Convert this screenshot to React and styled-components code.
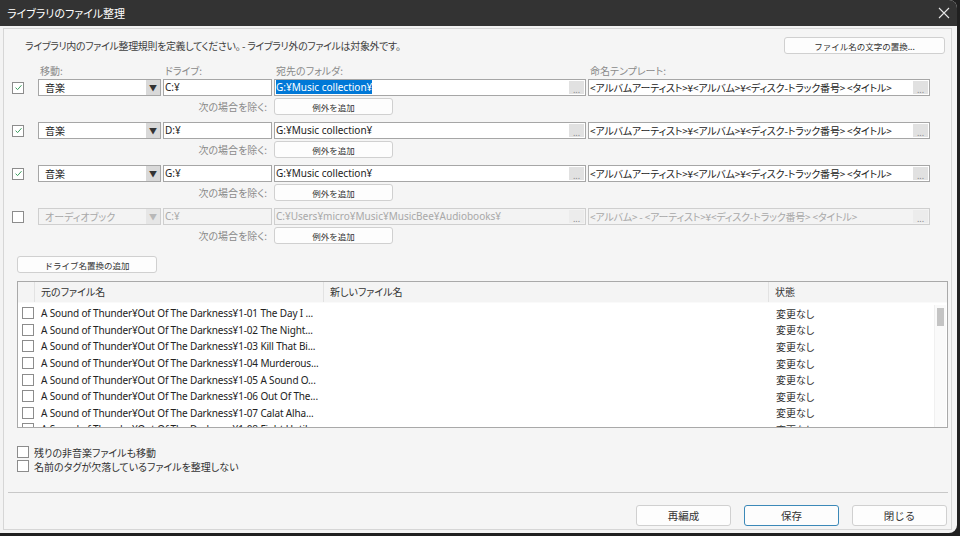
import React from "react";
import styled, { createGlobalStyle } from "styled-components";

const GlobalStyle = createGlobalStyle`
  body {
    margin: 0;
    background: #202020;
    font-family: "Noto Sans", "Noto Sans CJK JP", sans-serif;
    font-feature-settings: "palt";
  }
`;

const FONT = `"Noto Sans", "Noto Sans CJK JP", sans-serif`;
const JP = `"Noto Sans CJK JP", "Noto Sans", sans-serif`;

const rules = [
  { on: true, type: "音楽", drive: "C:¥", folder: "G:¥Music collection¥", selected: true, tpl: "<アルバムアーティスト>¥<アルバム>¥<ディスク-トラック番号> <タイトル>" },
  { on: true, type: "音楽", drive: "D:¥", folder: "G:¥Music collection¥", tpl: "<アルバムアーティスト>¥<アルバム>¥<ディスク-トラック番号> <タイトル>" },
  { on: true, type: "音楽", drive: "G:¥", folder: "G:¥Music collection¥", tpl: "<アルバムアーティスト>¥<アルバム>¥<ディスク-トラック番号> <タイトル>" },
  { on: false, type: "オーディオブック", drive: "C:¥", folder: "C:¥Users¥micro¥Music¥MusicBee¥Audiobooks¥", tpl: "<アルバム> - <アーティスト>¥<ディスク-トラック番号> <タイトル>" },
];

const files = [
  "1-01 The Day I ...",
  "1-02 The Night...",
  "1-03 Kill That Bi...",
  "1-04 Murderous...",
  "1-05 A Sound O...",
  "1-06 Out Of The...",
  "1-07 Calat Alha...",
  "1-08 Fight Until...",
];

function Check({ checked }) {
  return (
    <CheckBox>
      {checked && (
        <svg width="9" height="9" viewBox="0 0 9 9">
          <path d="M1.6 4.7 L3.6 6.6 L7.5 2.2" fill="none" stroke="#3a9d5d" strokeWidth="1" />
        </svg>
      )}
    </CheckBox>
  );
}

function Field({ value, disabled, selected, dots, jp }) {
  return (
    <FieldBox $disabled={disabled}>
      <FieldText $disabled={disabled} $jp={jp}>
        {selected ? <Selected>{value}</Selected> : value}
      </FieldText>
      {dots && <Dots $disabled={disabled}>...</Dots>}
    </FieldBox>
  );
}

function Rule({ rule }) {
  const off = !rule.on;
  return (
    <RuleBlock>
      <CheckCell>
        <Check checked={rule.on} />
      </CheckCell>
      <FieldBox $disabled={off}>
        <SelectText $disabled={off}>{rule.type}</SelectText>
        <Arrow $disabled={off}>▼</Arrow>
      </FieldBox>
      <Field value={rule.drive} disabled={off} />
      <Field value={rule.folder} disabled={off} selected={rule.selected} dots />
      <Field value={rule.tpl} disabled={off} dots jp />
      <ExceptLabel>次の場合を除く:</ExceptLabel>
      <ExceptButton>例外を追加</ExceptButton>
    </RuleBlock>
  );
}

export default function App() {
  return (
    <>
      <GlobalStyle />
      <Window>
        <TitleBar>
          <Title>ライブラリのファイル整理</Title>
          <svg width="12" height="12" viewBox="0 0 12 12">
            <path d="M1 1 L11 11 M11 1 L1 11" stroke="#e6e6e6" strokeWidth="1.1" />
          </svg>
        </TitleBar>
        <Body>
          <Panel>
            <TopRow>
              <Intro>ライブラリ内のファイル整理規則を定義してください。 - ライブラリ外のファイルは対象外です。</Intro>
              <Button $w={161}>ファイル名の文字の置換...</Button>
            </TopRow>
            <LabelRow>
              <span />
              <ColLabel>移動:</ColLabel>
              <ColLabel>ドライブ:</ColLabel>
              <ColLabel>宛先のフォルダ:</ColLabel>
              <ColLabel>命名テンプレート:</ColLabel>
            </LabelRow>
            <Rules>
              {rules.map((r, i) => (
                <Rule key={i} rule={r} />
              ))}
            </Rules>
            <DriveButton>ドライブ名置換の追加</DriveButton>
            <Table>
              <HeadRow>
                <HeadCell />
                <HeadCell>元のファイル名</HeadCell>
                <HeadCell>新しいファイル名</HeadCell>
                <HeadCell $last>状態</HeadCell>
              </HeadRow>
              <TableBody>
                <Rows>
                  {files.map((f, i) => (
                    <Row key={i}>
                      <RowCheck>
                        <Check />
                      </RowCheck>
                      <NameCell>A Sound of Thunder¥Out Of The Darkness¥{f}</NameCell>
                      <span />
                      <StatusCell>変更なし</StatusCell>
                    </Row>
                  ))}
                </Rows>
                <ScrollTrack>
                  <Thumb />
                </ScrollTrack>
              </TableBody>
            </Table>
            <Options>
              <Option>
                <Check />
                残りの非音楽ファイルも移動
              </Option>
              <Option>
                <Check />
                名前のタグが欠落しているファイルを整理しない
              </Option>
            </Options>
            <Separator />
            <Footer>
              <Button $w={95} $h={21}>再編成</Button>
              <Button $w={95} $h={21} $primary>保存</Button>
              <Button $w={95} $h={21}>閉じる</Button>
            </Footer>
          </Panel>
        </Body>
      </Window>
    </>
  );
}

const Window = styled.div`
  width: 957px;
  height: 533px;
  background: #f3f3f3;
  display: flex;
  flex-direction: column;
  border-radius: 0 8px 8px 0;
  overflow: hidden;
`;

const TitleBar = styled.div`
  height: 26px;
  flex: none;
  background: #333333;
  display: flex;
  align-items: center;
  justify-content: space-between;
  padding: 0 7px;
  box-sizing: border-box;
`;

const Title = styled.div`
  color: #ffffff;
  font-family: ${JP};
  font-size: 11px;
`;

const Body = styled.div`
  flex: 1;
  min-height: 0;
  padding: 2px 5px 3px 3px;
  display: flex;
`;

const Panel = styled.div`
  flex: 1;
  border: 1px solid #d6d6d6;
  background: #f5f5f5;
  display: flex;
  flex-direction: column;
  padding: 0 3px 0 0;
  & > * {
    flex-shrink: 0;
  }
`;

const TopRow = styled.div`
  display: flex;
  align-items: center;
  justify-content: space-between;
  margin-top: 8px;
  padding: 0 3px 0 21px;
`;

const Intro = styled.div`
  font-family: ${JP};
  font-size: 10px;
  letter-spacing: -0.35px;
  color: #404040;
`;

const Button = styled.button`
  width: ${(p) => p.$w}px;
  height: ${(p) => p.$h || 17}px;
  flex: none;
  padding: 0;
  background: #fdfdfd;
  border: 1px solid ${(p) => (p.$primary ? "#3c89b8" : "#d0d0d0")};
  border-radius: 3px;
  font-family: ${JP};
  font-size: ${(p) => (p.$h ? 10.5 : 8.5)}px;
  color: #333;
  box-sizing: border-box;
`;

const GRID = `24px 123px 109px 312px 342px`;

const LabelRow = styled.div`
  display: grid;
  grid-template-columns: ${GRID};
  column-gap: 2px;
  margin: 10px 0 2px 8px;
  height: 13px;
`;

const ColLabel = styled.div`
  font-family: ${JP};
  font-size: 10px;
  line-height: 13px;
  color: #8a8a8a;
  padding-left: 2px;
`;

const Rules = styled.div`
  display: flex;
  flex-direction: column;
  gap: 7px;
  margin-left: 8px;
`;

const RuleBlock = styled.div`
  display: grid;
  grid-template-columns: ${GRID};
  grid-template-rows: 17px 17px;
  column-gap: 2px;
  row-gap: 2px;
`;

const CheckCell = styled.div`
  display: flex;
  align-items: center;
`;

const CheckBox = styled.span`
  width: 12px;
  height: 12px;
  flex: none;
  box-sizing: border-box;
  border: 1px solid #8c8c8c;
  background: #fff;
  display: inline-flex;
  align-items: center;
  justify-content: center;
`;

const FieldBox = styled.div`
  display: flex;
  align-items: stretch;
  border: 1px solid ${(p) => (p.$disabled ? "#cfcfcf" : "#a6a6a6")};
  background: ${(p) => (p.$disabled ? "#f3f3f3" : "#ffffff")};
  box-sizing: border-box;
  min-width: 0;
`;

const FieldText = styled.div`
  flex: 1;
  min-width: 0;
  overflow: hidden;
  white-space: nowrap;
  padding-left: 1px;
  font-family: ${(p) => (p.$jp ? JP : FONT)};
  font-size: 10px;
  letter-spacing: ${(p) => (p.$jp ? "-0.2px" : "0")};
  line-height: 15px;
  color: ${(p) => (p.$disabled ? "#a8a8a8" : "#222")};
`;

const SelectText = styled(FieldText)`
  font-family: ${JP};
  padding-left: 6px;
`;

const Selected = styled.span`
  background: #0078d7;
  color: #fff;
`;

const Dots = styled.div`
  width: 15px;
  flex: none;
  background: ${(p) => (p.$disabled ? "#ececec" : "#e1e1e1")};
  color: #888;
  font-size: 9px;
  line-height: 18px;
  text-align: center;
  margin: 1px 1px 1px 0;
`;

const Arrow = styled.div`
  width: 14px;
  flex: none;
  background: ${(p) => (p.$disabled ? "#e6e6e6" : "#d9d9d9")};
  color: ${(p) => (p.$disabled ? "#b8b8b8" : "#333")};
  font-size: 8px;
  line-height: 15px;
  text-align: center;
`;

const ExceptLabel = styled.div`
  grid-column: 1 / 4;
  text-align: right;
  padding-right: 5px;
  font-family: ${JP};
  font-size: 10px;
  line-height: 17px;
  color: #8a8a8a;
`;

const ExceptButton = styled(Button).attrs({ $w: 119 })``;

const DriveButton = styled(Button).attrs({ $w: 140 })`
  margin: 12px 0 0 13px;
`;

const Table = styled.div`
  margin: 8px 0 0 13px;
  height: 147px;
  border: 1px solid #a9a9a9;
  background: #fff;
  display: flex;
  flex-direction: column;
  box-sizing: border-box;
  overflow: hidden;
`;

const COLS = `17px 289px 445px 1fr`;

const HeadRow = styled.div`
  display: grid;
  grid-template-columns: ${COLS};
  height: 20px;
  flex: none;
  background: #f4f4f4;
  border-bottom: 1px solid #fafafa;
`;

const HeadCell = styled.div`
  font-family: ${JP};
  font-size: 10px;
  line-height: 20px;
  color: #333;
  padding-left: 6px;
  border-right: ${(p) => (p.$last ? "none" : "1px solid #e2e2e2")};
`;

const TableBody = styled.div`
  flex: 1;
  display: flex;
  min-height: 0;
  padding-top: 2px;
`;

const Rows = styled.div`
  flex: 1;
  overflow: hidden;
`;

const Row = styled.div`
  display: grid;
  grid-template-columns: ${COLS};
  height: 16.6px;
  align-items: center;
`;

const RowCheck = styled.div`
  display: flex;
  padding-left: 4px;
`;

const NameCell = styled.div`
  font-family: ${FONT};
  font-size: 10px;
  letter-spacing: -0.15px;
  color: #222;
  padding-left: 6px;
  white-space: nowrap;
  overflow: hidden;
`;

const StatusCell = styled.div`
  font-family: ${JP};
  font-size: 10px;
  color: #333;
  padding-left: 7px;
`;

const ScrollTrack = styled.div`
  width: 11px;
  flex: none;
  border-left: 1px solid #f0f0f0;
  background: #fafafa;
  padding-top: 3px;
  display: flex;
  justify-content: center;
  margin-right: 1px;
`;

const Thumb = styled.div`
  width: 7px;
  height: 18px;
  background: #c4c4c4;
`;

const Options = styled.div`
  margin: 17px 0 0 13px;
  display: flex;
  flex-direction: column;
`;

const Option = styled.label`
  display: flex;
  align-items: center;
  gap: 5px;
  height: 14px;
  font-family: ${JP};
  font-size: 10px;
  color: #333;
`;

const Separator = styled.div`
  margin: 19px 0 0 4px;
  height: 1px;
  background: #c8c8c8;
`;

const Footer = styled.div`
  margin-top: 12px;
  display: flex;
  justify-content: flex-end;
  gap: 13px;
  padding-right: 1px;
`;
